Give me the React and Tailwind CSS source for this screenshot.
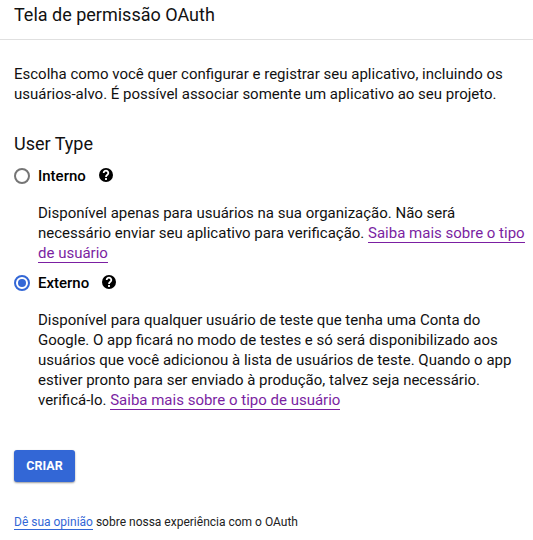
function Help() {
  return (
    <svg className="mb-[2px] size-[14px]" viewBox="2 2 20 20" fill="#000">
      <circle cx="12" cy="12" r="10" />
      <path d="M8.7 9.2a3.3 3.3 0 1 1 5.5 2.3c-1.4 1.1-2.2 1.6-2.2 3.2" fill="none" stroke="#fff" strokeWidth="2.6" />
      <path d="M10.7 16.4h2.6v2.6h-2.6z" fill="#fff" />
    </svg>
  );
}

function Radio({ checked }) {
  return (
    <span className={checked ? "flex size-4 items-center justify-center rounded-full border-2 border-[#3367d6]" : "flex size-4 rounded-full border-2 border-[#757575]"}>
      {checked && <span className="size-2 rounded-full bg-[#3367d6]" />}
    </span>
  );
}

function Link({ children }) {
  return <a className="border-b border-[#7b1fa2] text-[#7b1fa2]">{children}</a>;
}

export default function App() {
  return (
    <main className="h-[540px] w-[533px] overflow-hidden bg-white font-['Roboto',sans-serif] text-[15px] leading-5 whitespace-nowrap text-black">
      <header className="h-10 border-b border-[#e0e0e0] pt-[3px] pl-[14px] text-[18px] leading-6 text-[#111]">Tela de permissão OAuth</header>
      <div className="pl-[14px]">
        <p className="pt-6 text-[#111]">
          Escolha como você quer configurar e registrar seu aplicativo, incluindo os<br />
          usuários-alvo. É possível associar somente um aplicativo ao seu projeto.
        </p>
        <h2 className="mt-7 text-[18px] leading-6 text-[#111]">User Type</h2>
        <div className="mt-[10px] flex h-5 items-center">
          <Radio />
          <span className="mr-[13px] ml-2 font-medium">Interno</span>
          <Help />
        </div>
        <p className="mt-[17px] pl-6 text-[#111]">
          Disponível apenas para usuários na sua organização. Não será<br />
          necessário enviar seu aplicativo para verificação. <Link>Saiba mais sobre o tipo</Link><br />
          <Link>de usuário</Link>
        </p>
        <div className="mt-[10px] flex h-5 items-center">
          <Radio checked />
          <span className="mr-[13px] ml-2 font-medium">Externo</span>
          <Help />
        </div>
        <p className="mt-[17px] pl-6 text-[#111]">
          Disponível para qualquer usuário de teste que tenha uma Conta do<br />
          Google. O app ficará no modo de testes e só será disponibilizado aos<br />
          usuários que você adicionou à lista de usuários de teste. Quando o app<br />
          estiver pronto para ser enviado à produção, talvez seja necessário.<br />
          verificá-lo. <Link>Saiba mais sobre o tipo de usuário</Link>
        </p>
        <button className="mt-10 block h-8 w-[61px] rounded-[3px] bg-[#3367d6] text-[12.5px] font-bold text-white shadow-[0_1px_2px_rgba(0,0,0,0.4)]">CRIAR</button>
        <p className="mt-[30px] text-[12px] text-[#212121]">
          <a className="border-b border-[#3367d6] text-[#3367d6]">Dê sua opinião</a> sobre nossa experiência com o OAuth
        </p>
      </div>
    </main>
  );
}
